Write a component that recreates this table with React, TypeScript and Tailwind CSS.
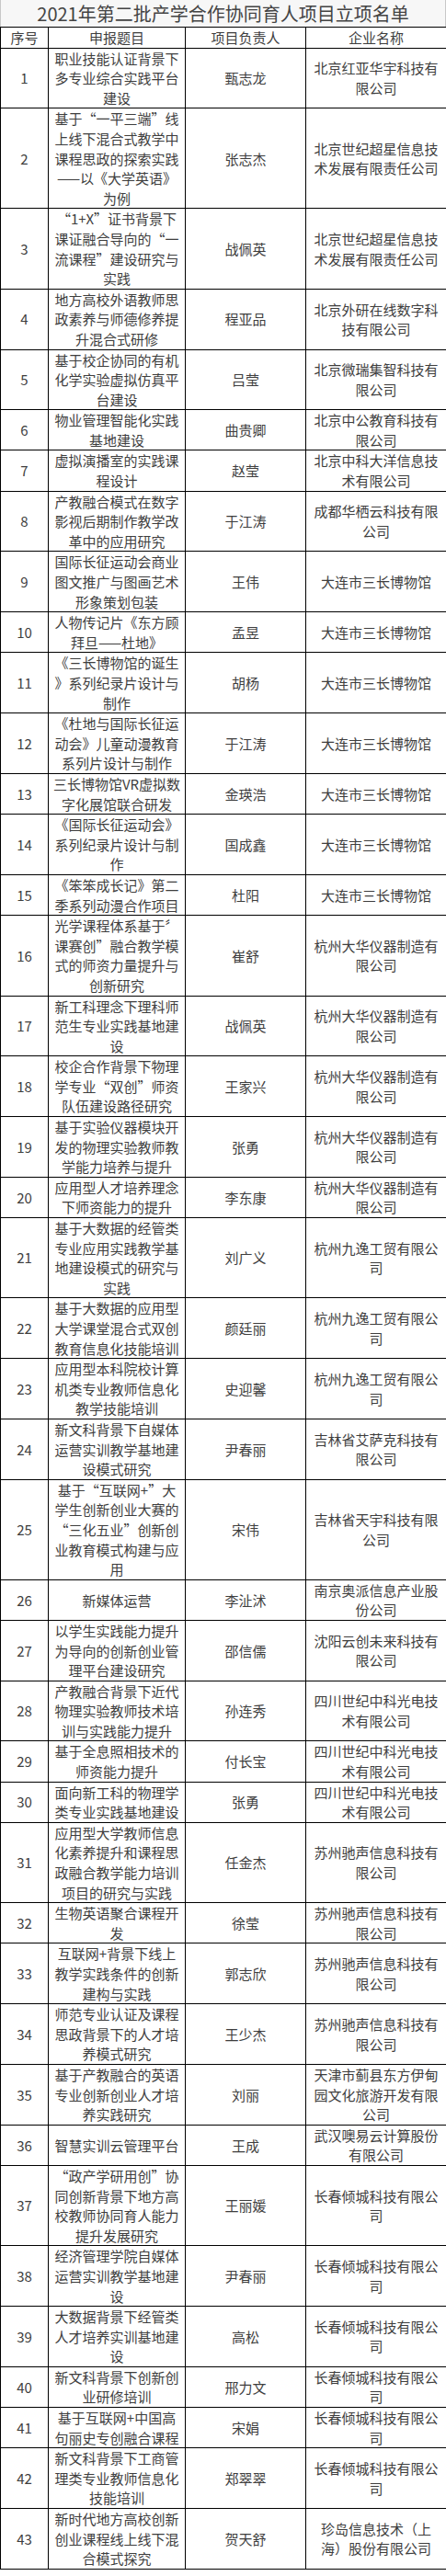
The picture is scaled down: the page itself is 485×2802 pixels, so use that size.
type Row = { no: string; title: string[]; lead: string; company: string[] };

const r = (no: number, title: string, lead: string, company: string): Row => ({
  no: String(no),
  title: title.split("|"),
  lead,
  company: company.split("|"),
});

const rows: Row[] = [
  r(1, "职业技能认证背景下|多专业综合实践平台|建设", "甄志龙", "北京红亚华宇科技有|限公司"),
  r(2, "基于“一平三端”线|上线下混合式教学中|课程思政的探索实践|——以《大学英语》|为例", "张志杰", "北京世纪超星信息技|术发展有限责任公司"),
  r(3, "“1+X”证书背景下|课证融合导向的“一|流课程”建设研究与|实践", "战佩英", "北京世纪超星信息技|术发展有限责任公司"),
  r(4, "地方高校外语教师思|政素养与师德修养提|升混合式研修", "程亚品", "北京外研在线数字科|技有限公司"),
  r(5, "基于校企协同的有机|化学实验虚拟仿真平|台建设", "吕莹", "北京微瑞集智科技有|限公司"),
  r(6, "物业管理智能化实践|基地建设", "曲贵卿", "北京中公教育科技有|限公司"),
  r(7, "虚拟演播室的实践课|程设计", "赵莹", "北京中科大洋信息技|术有限公司"),
  r(8, "产教融合模式在数字|影视后期制作教学改|革中的应用研究", "于江涛", "成都华栖云科技有限|公司"),
  r(9, "国际长征运动会商业|图文推广与图画艺术|形象策划包装", "王伟", "大连市三长博物馆"),
  r(10, "人物传记片《东方顾|拜旦——杜地》", "孟昱", "大连市三长博物馆"),
  r(11, "《三长博物馆的诞生|》系列纪录片设计与|制作", "胡杨", "大连市三长博物馆"),
  r(12, "《杜地与国际长征运|动会》儿童动漫教育|系列片设计与制作", "于江涛", "大连市三长博物馆"),
  r(13, "三长博物馆VR虚拟数|字化展馆联合研发", "金瑛浩", "大连市三长博物馆"),
  r(14, "《国际长征运动会》|系列纪录片设计与制|作", "国成鑫", "大连市三长博物馆"),
  r(15, "《笨笨成长记》第二|季系列动漫合作项目", "杜阳", "大连市三长博物馆"),
  r(16, "光学课程体系基于〞|课赛创”融合教学模|式的师资力量提升与|创新研究", "崔舒", "杭州大华仪器制造有|限公司"),
  r(17, "新工科理念下理科师|范生专业实践基地建|设", "战佩英", "杭州大华仪器制造有|限公司"),
  r(18, "校企合作背景下物理|学专业“双创”师资|队伍建设路径研究", "王家兴", "杭州大华仪器制造有|限公司"),
  r(19, "基于实验仪器模块开|发的物理实验教师教|学能力培养与提升", "张勇", "杭州大华仪器制造有|限公司"),
  r(20, "应用型人才培养理念|下师资能力的提升", "李东康", "杭州大华仪器制造有|限公司"),
  r(21, "基于大数据的经管类|专业应用实践教学基|地建设模式的研究与|实践", "刘广义", "杭州九逸工贸有限公|司"),
  r(22, "基于大数据的应用型|大学课堂混合式双创|教育信息化技能培训", "颜廷丽", "杭州九逸工贸有限公|司"),
  r(23, "应用型本科院校计算|机类专业教师信息化|教学技能培训", "史迎馨", "杭州九逸工贸有限公|司"),
  r(24, "新文科背景下自媒体|运营实训教学基地建|设模式研究", "尹春丽", "吉林省艾萨克科技有|限公司"),
  r(25, "基于“互联网+”大|学生创新创业大赛的|“三化五业”创新创|业教育模式构建与应|用", "宋伟", "吉林省天宇科技有限|公司"),
  r(26, "新媒体运营", "李沚沭", "南京奥派信息产业股|份公司"),
  r(27, "以学生实践能力提升|为导向的创新创业管|理平台建设研究", "邵信儒", "沈阳云创未来科技有|限公司"),
  r(28, "产教融合背景下近代|物理实验教师技术培|训与实践能力提升", "孙连秀", "四川世纪中科光电技|术有限公司"),
  r(29, "基于全息照相技术的|师资能力提升", "付长宝", "四川世纪中科光电技|术有限公司"),
  r(30, "面向新工科的物理学|类专业实践基地建设", "张勇", "四川世纪中科光电技|术有限公司"),
  r(31, "应用型大学教师信息|化素养提升和课程思|政融合教学能力培训|项目的研究与实践", "任金杰", "苏州驰声信息科技有|限公司"),
  r(32, "生物英语聚合课程开|发", "徐莹", "苏州驰声信息科技有|限公司"),
  r(33, "互联网+背景下线上|教学实践条件的创新|建构与实践", "郭志欣", "苏州驰声信息科技有|限公司"),
  r(34, "师范专业认证及课程|思政背景下的人才培|养模式研究", "王少杰", "苏州驰声信息科技有|限公司"),
  r(35, "基于产教融合的英语|专业创新创业人才培|养实践研究", "刘丽", "天津市蓟县东方伊甸|园文化旅游开发有限|公司"),
  r(36, "智慧实训云管理平台", "王成", "武汉噢易云计算股份|有限公司"),
  r(37, "“政产学研用创”协|同创新背景下地方高|校教师协同育人能力|提升发展研究", "王丽媛", "长春倾城科技有限公|司"),
  r(38, "经济管理学院自媒体|运营实训教学基地建|设", "尹春丽", "长春倾城科技有限公|司"),
  r(39, "大数据背景下经管类|人才培养实训基地建|设", "高松", "长春倾城科技有限公|司"),
  r(40, "新文科背景下创新创|业研修培训", "邢力文", "长春倾城科技有限公|司"),
  r(41, "基于互联网+中国高|句丽史专创融合课程", "宋娟", "长春倾城科技有限公|司"),
  r(42, "新文科背景下工商管|理类专业教师信息化|技能培训", "郑翠翠", "长春倾城科技有限公|司"),
  r(43, "新时代地方高校创新|创业课程线上线下混|合模式探究", "贺天舒", "珍岛信息技术（上|海）股份有限公司"),
];

function Lines({ lines }: { lines: string[] }) {
  return (
    <>
      {lines.map((l, i) => (
        <div key={i} className="whitespace-nowrap">
          {l}
        </div>
      ))}
    </>
  );
}

const td = "border border-black p-0 text-center align-middle";

export default function App() {
  return (
    <div
      className="w-[485px] bg-white text-[#3e3e3e]"
      style={{ fontFamily: '"Noto Sans CJK SC", "Noto Sans", sans-serif' }}
    >
      <div className="flex h-[29px] items-center justify-center border-x border-[#c8c8c8] bg-[#f7f7f7] text-[20px] leading-none text-[#444]">
        2021年第二批产学合作协同育人项目立项名单
      </div>
      <table className="w-[485px] table-fixed border-collapse text-[15px] leading-[21.6px]">
        <colgroup>
          <col className="w-[52px]" />
          <col className="w-[149px]" />
          <col className="w-[131px]" />
          <col className="w-[153px]" />
        </colgroup>
        <thead>
          <tr>
            <th className={td + " font-normal"}>序号</th>
            <th className={td + " font-normal"}>申报题目</th>
            <th className={td + " font-normal"}>项目负责人</th>
            <th className={td + " font-normal"}>企业名称</th>
          </tr>
        </thead>
        <tbody>
          {rows.map((row) => (
            <tr key={row.no}>
              <td className={td}>{row.no}</td>
              <td className={td}>
                <Lines lines={row.title} />
              </td>
              <td className={td}>{row.lead}</td>
              <td className={td}>
                <Lines lines={row.company} />
              </td>
            </tr>
          ))}
        </tbody>
      </table>
    </div>
  );
}
